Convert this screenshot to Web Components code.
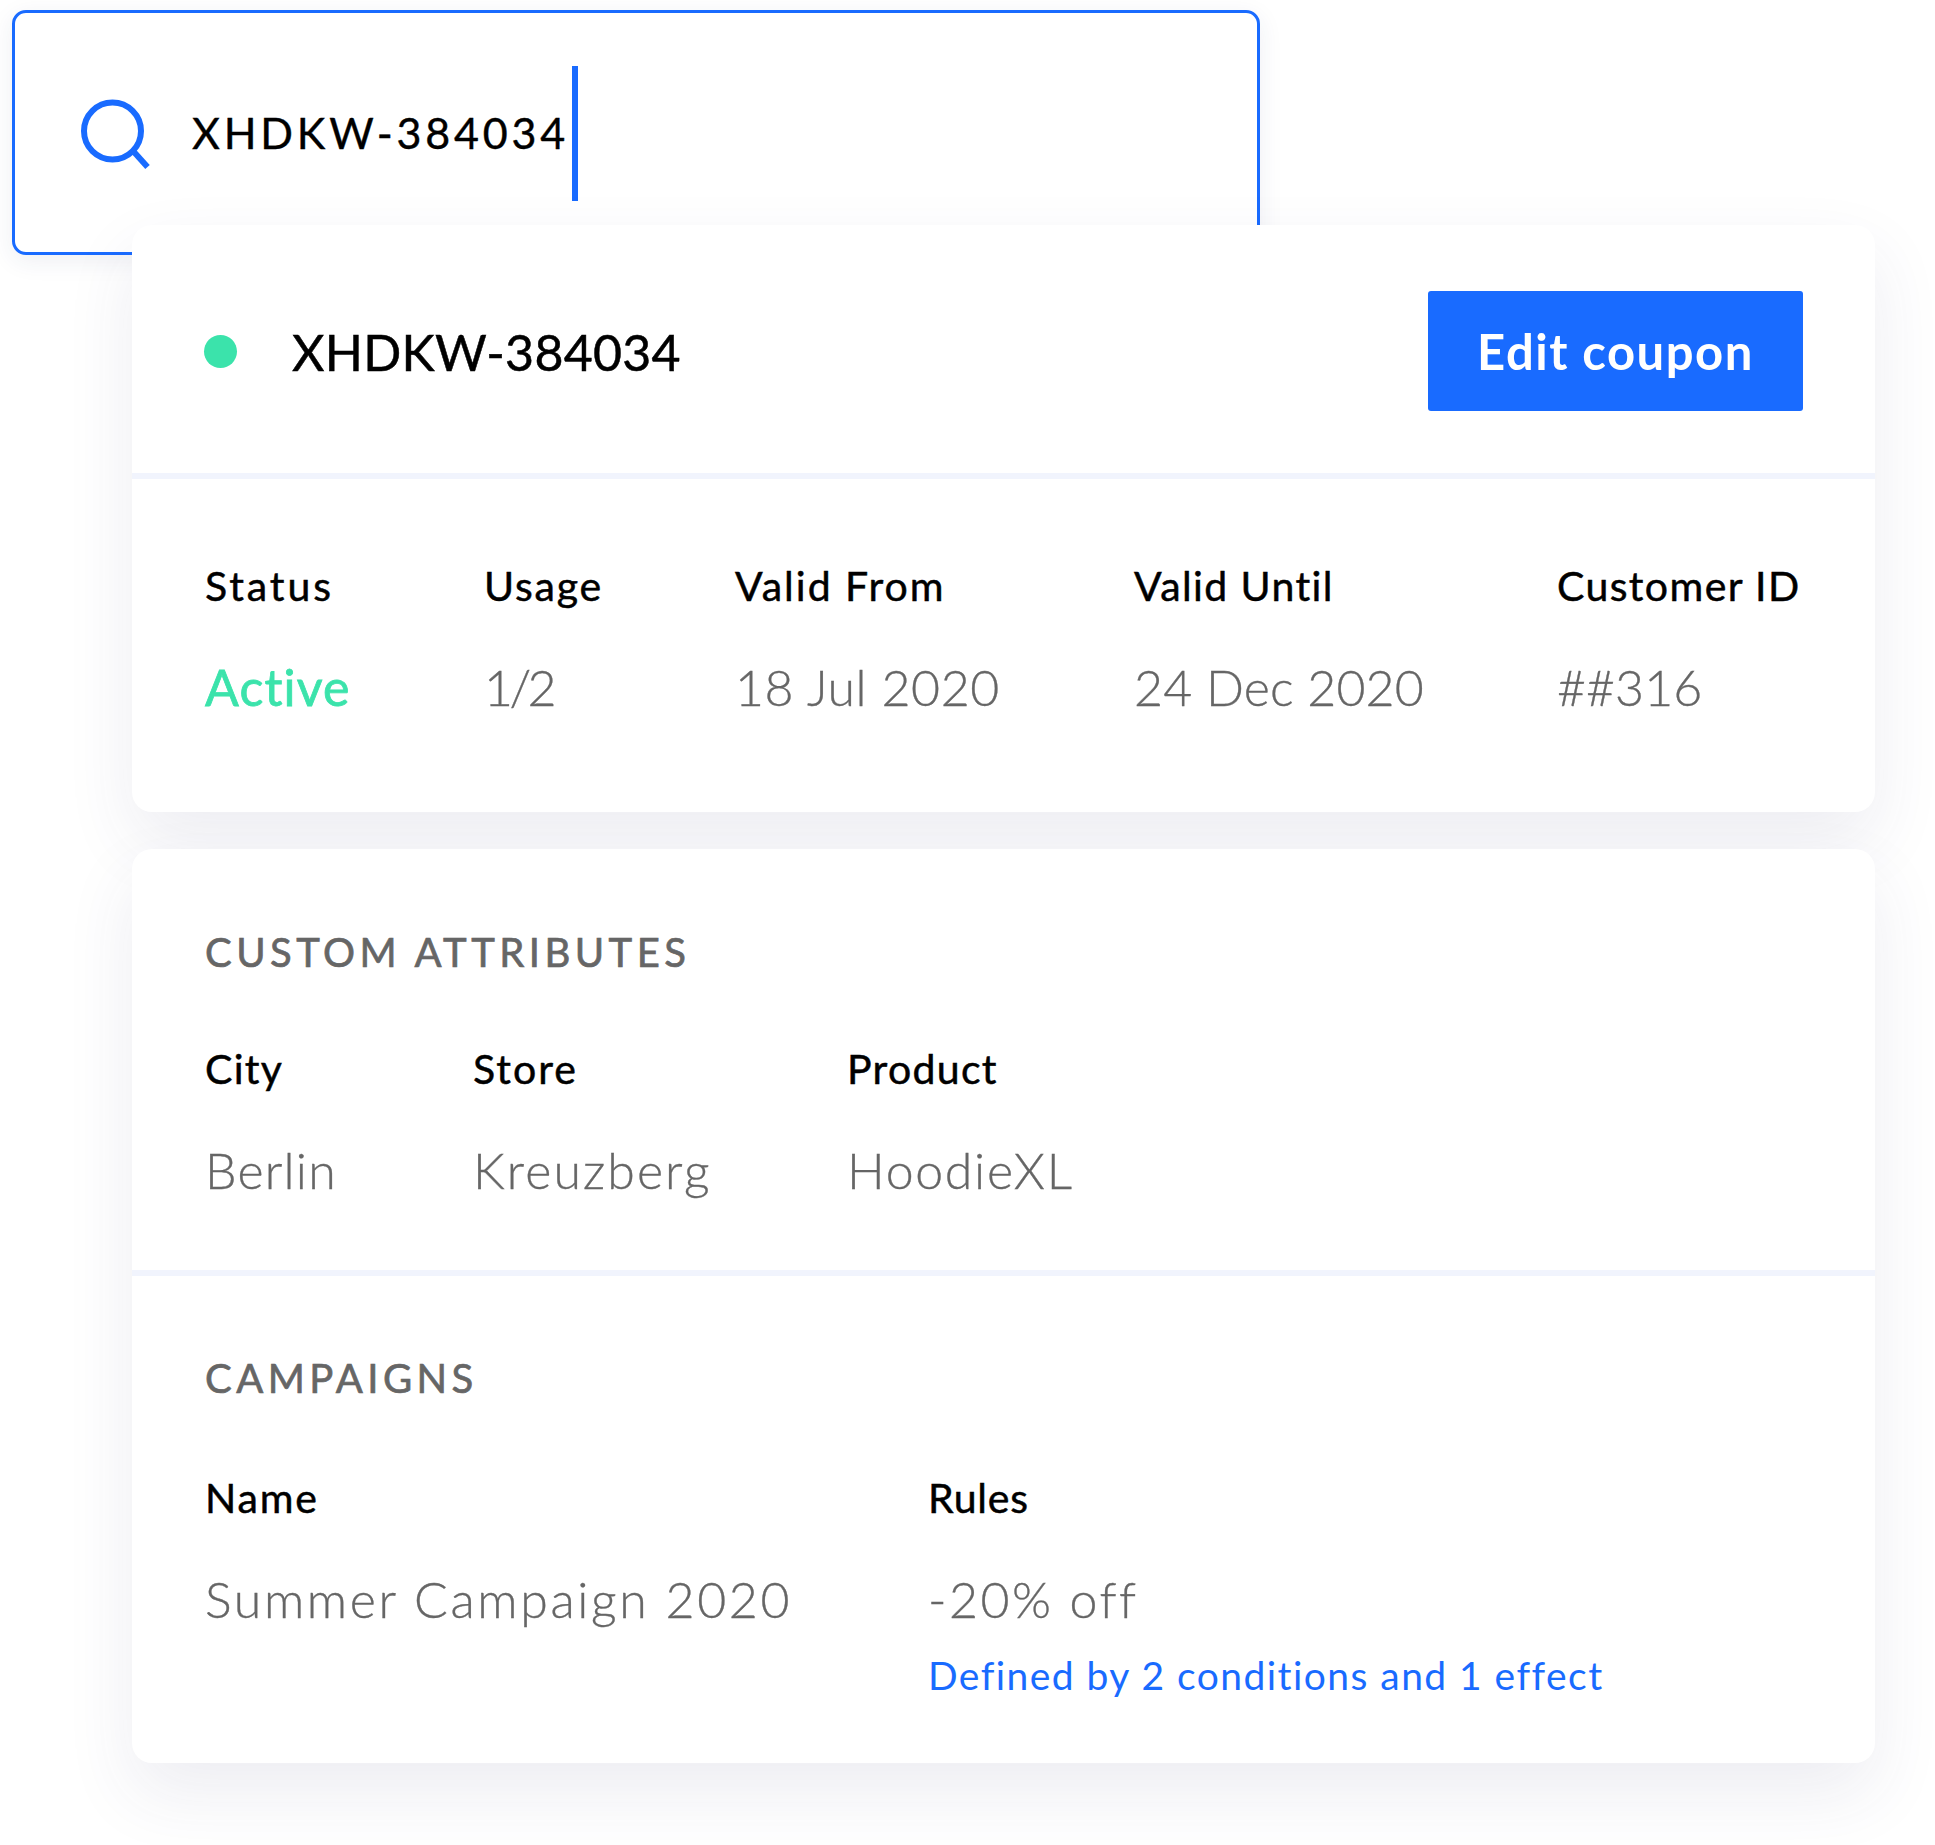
<!DOCTYPE html>
<html lang="en"><head><meta charset="utf-8"><title>Coupon</title>
<style>
html,body{margin:0;background:#fff}
body{font-family:Lato,"Open Sans",sans-serif;color:#000;width:1935px;height:1845px;overflow:hidden}
</style></head><body>
<coupon-view>
  <search-box>XHDKW-384034</search-box>
  <panel-card class="first">
    <coupon-head>XHDKW-384034</coupon-head>
    <field-row cols="279px 251px 399px 423px auto" pad="84px 0 0 73px">
      <data-field label="Status" ltrack="2.9" track="1.2" tone="active">Active</data-field>
      <data-field label="Usage" ltrack="1.8" track="-3.6">1/2</data-field>
      <data-field label="Valid From" ltrack="2" track=".6">18 Jul 2020</data-field>
      <data-field label="Valid Until" ltrack="1.4" track=".13">24 Dec 2020</data-field>
      <data-field label="Customer ID" ltrack="1.4" track=".06">##316</data-field>
    </field-row>
  </panel-card>
  <panel-card class="second">
    <card-section title="CUSTOM ATTRIBUTES" height="427" gap="71">
      <field-row cols="268px 374px auto">
        <data-field label="City" track="1.2">Berlin</data-field>
        <data-field label="Store" ltrack="2" track="2.1">Kreuzberg</data-field>
        <data-field label="Product" track="1.7">HoodieXL</data-field>
      </field-row>
    </card-section>
    <card-section title="CAMPAIGNS" gap="74" top="79" last>
      <field-row cols="723px auto">
        <data-field label="Name" ltrack="1.8" track="2.65">Summer Campaign 2020</data-field>
        <data-field label="Rules" ltrack=".8" track="2.5" note="Defined by 2 conditions and 1 effect">-20% off</data-field>
      </field-row>
    </card-section>
  </panel-card>
</coupon-view>
<script>
const def=(n,html,init)=>customElements.define(n,class extends HTMLElement{
  constructor(){super();this.attachShadow({mode:'open'}).innerHTML=html;}
  connectedCallback(){init&&init(this,this.shadowRoot);}
});
def('coupon-view',`<style>:host{display:block;box-sizing:border-box;width:1935px;padding:10px 0 0 12px}
::slotted(panel-card.first){margin:-30px 0 0 120px;height:587px}
::slotted(panel-card.second){margin:37px 0 0 120px;height:914px}</style><slot></slot>`);
def('search-box',`<style>:host{display:flex;align-items:center;box-sizing:border-box;width:1248px;height:245px;border:3px solid #196bff;border-radius:14px;padding:0 0 0 66px;background:#fff;box-shadow:0 6px 24px rgba(40,50,100,.08)}
svg{width:70px;height:70px;flex:none;overflow:visible}
.t{font-size:43px;letter-spacing:3.8px;margin-left:41px;-webkit-text-stroke:.4px #000}
.c{width:6px;height:135px;background:#196bff;margin:1px 0 0 3px;flex:none}
</style><svg viewBox="0 0 70 70" fill="none" stroke="#196bff" stroke-width="6"><circle cx="31.5" cy="33" r="28.5"/><path d="M53 54l13.500 15"/></svg><span class="t"><slot></slot></span><i class="c"></i>`);
def('panel-card',`<style>:host{display:block;position:relative;box-sizing:border-box;width:1743px;background:#fff;border-radius:20px;box-shadow:0 30px 70px rgba(50,60,110,.09)}</style><slot></slot>`);
def('coupon-head',`<style>:host{display:flex;align-items:center;box-sizing:border-box;height:254px;padding:3px 72px 0;border-bottom:6px solid #f1f4fd}
i{width:33px;height:33px;border-radius:50%;background:#3be3ab;flex:none;margin-top:2px}
.t{font-size:50px;margin-left:55px;flex:1;letter-spacing:.3px;-webkit-text-stroke:.5px #000;margin-top:2px}
.b{width:375px;height:120px;background:#196bff;color:#fff;border-radius:3px;display:flex;align-items:center;justify-content:center;font-size:49px;font-weight:700;letter-spacing:1.5px;flex:none}
</style><i></i><span class="t"><slot></slot></span><span class="b">Edit coupon</span>`);
def('field-row',`<style>:host{display:grid;box-sizing:border-box}</style><slot></slot>`,(h)=>{
  h.style.gridTemplateColumns=h.getAttribute('cols');
  if(h.getAttribute('pad'))h.style.padding=h.getAttribute('pad');
});
def('data-field',`<style>:host{display:block}
.l{font-size:41px;line-height:46px;color:#000;letter-spacing:1.3px;-webkit-text-stroke:.5px #000}
.v{font-size:50px;line-height:58px;margin-top:49px;color:#666;font-weight:300;-webkit-text-stroke:.35px #666}
:host([tone=active]) .v{color:#3be3ab;font-weight:400;-webkit-text-stroke:.8px #3be3ab}
.n{font-size:39px;line-height:46px;color:#196bff;margin-top:24px;letter-spacing:1.45px}
</style><div class="l"></div><div class="v"><slot></slot></div><div class="n"></div>`,(h,s)=>{
  const l=s.querySelector('.l');l.textContent=h.getAttribute('label');
  if(h.getAttribute('ltrack'))l.style.letterSpacing=h.getAttribute('ltrack')+'px';
  s.querySelector('.v').style.letterSpacing=(h.getAttribute('track')||'0')+'px';
  const n=s.querySelector('.n');n.textContent=h.getAttribute('note')||'';if(!h.getAttribute('note'))n.remove();
});
def('card-section',`<style>:host{display:block;box-sizing:border-box;padding:80px 0 0 73px}
:host(:not([last])){border-bottom:6px solid #f1f4fd}
h2{margin:0;font-size:40px;line-height:46px;font-weight:400;color:#666;letter-spacing:4.45px;-webkit-text-stroke:.7px #666}
</style><h2></h2><slot></slot>`,(h,s)=>{
  const t=s.querySelector('h2');t.textContent=h.getAttribute('title');t.style.marginBottom=h.getAttribute('gap')+'px';
  if(h.getAttribute('height'))h.style.height=h.getAttribute('height')+'px';
  if(h.getAttribute('top'))h.style.paddingTop=h.getAttribute('top')+'px';
});
</script>
</body></html>
